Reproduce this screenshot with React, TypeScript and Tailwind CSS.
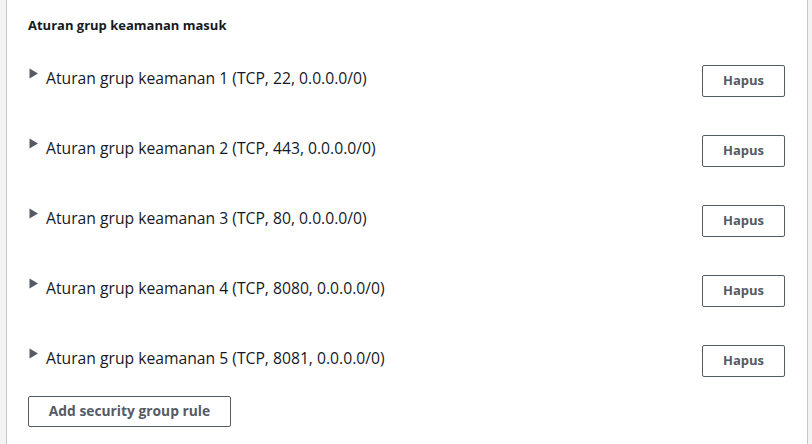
import React from "react";

const rules = [
  "Aturan grup keamanan 1 (TCP, 22, 0.0.0.0/0)",
  "Aturan grup keamanan 2 (TCP, 443, 0.0.0.0/0)",
  "Aturan grup keamanan 3 (TCP, 80, 0.0.0.0/0)",
  "Aturan grup keamanan 4 (TCP, 8080, 0.0.0.0/0)",
  "Aturan grup keamanan 5 (TCP, 8081, 0.0.0.0/0)",
];

export default function App() {
  return (
    <div
      className="w-[812px] h-[444px] bg-[#f2f3f3] overflow-hidden"
      style={{ fontFamily: '"Open Sans", "Liberation Sans", sans-serif' }}
    >
      <div className="ml-[6px] w-[802px] h-full bg-white border-x border-[#c6c6c6] text-[#16191f]">
        <div className="pl-[21px] pt-[16px] h-[46px] text-[13px] leading-[18px] font-bold">
          Aturan grup keamanan masuk
        </div>
        {rules.map((r) => (
          <div key={r} className="h-[70px] flex items-center pl-[21px] pr-[22px]">
            <div className="flex-1 self-stretch flex items-start pt-[22px]">
              <svg width="10" height="11" viewBox="0 0 10 11" className="ml-[1px] mr-[7px]">
                <path d="M0.5 0.5 L9 5.5 L0.5 10.5 Z" fill="#545b64" />
              </svg>
              <span className="text-[15.7px] leading-[20px]">{r}</span>
            </div>
            <button className="w-[83px] h-[32px] border border-[#545b64] rounded-[2px] text-[13px] font-bold text-[#545b64] bg-white">
              Hapus
            </button>
          </div>
        ))}
        <div className="pl-[21px]">
          <button className="w-[203px] h-[31px] border border-[#545b64] rounded-[2px] text-[13.8px] font-bold text-[#545b64] bg-white">
            Add security group rule
          </button>
        </div>
      </div>
    </div>
  );
}
